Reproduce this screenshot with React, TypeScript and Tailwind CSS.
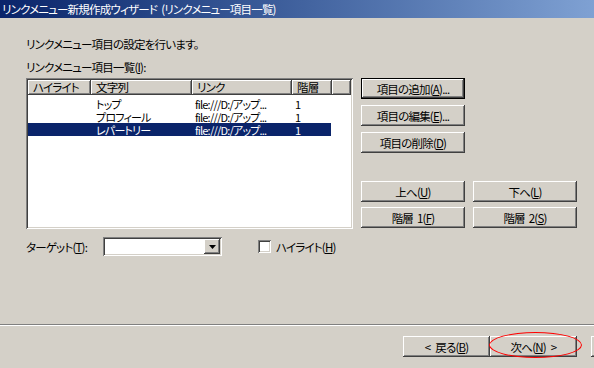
import React from "react";

const raised =
  "bg-[#d4d0c8] shadow-[inset_-1px_-1px_#404040,inset_1px_1px_#ffffff,inset_-2px_-2px_#808080,inset_2px_2px_#d4d0c8]";
const sunken =
  "bg-white shadow-[inset_1px_1px_#808080,inset_-1px_-1px_#ffffff,inset_2px_2px_#404040,inset_-2px_-2px_#d4d0c8]";

const Btn = ({
  children,
  w = "w-[104px]",
  def = false,
}: {
  children?: React.ReactNode;
  w?: string;
  def?: boolean;
}) => (
  <div
    className={`${w} h-[21px] shrink-0 flex items-center justify-center whitespace-nowrap ${
      def ? "border border-black" : ""
    }`}
  >
    <div className={`${raised} w-full h-full flex items-center justify-center`}>
      {children}
    </div>
  </div>
);

const rows = [
  { text: "トップ", link: "file:///D:/アップ...", lv: "1" },
  { text: "プロフィール", link: "file:///D:/アップ...", lv: "1" },
  { text: "レパートリー", link: "file:///D:/アップ...", lv: "1", sel: true },
];

export default function App() {
  return (
    <div
      className="w-[594px] h-[368px] bg-[#d4d0c8] text-black text-[11.5px] leading-[14px] flex flex-col overflow-hidden [font-feature-settings:'palt'] tracking-[-0.8px]"
      style={{ fontFamily: '"Noto Sans CJK JP", "Liberation Sans", sans-serif' }}
    >
      {/* title bar */}
      <div className="h-[18px] shrink-0 bg-gradient-to-r from-[#0a246a] to-[#7fa1d3] text-white flex items-center pl-[2px] whitespace-nowrap">
        リンクメニュー新規作成ウィザード<span className="ml-[4px]">(リンクメニュー項目一覧)</span>
      </div>

      <div className="flex-1 flex flex-col pl-[26px]">
        <div className="mt-[19px] h-[14px]">リンクメニュー項目の設定を行います。</div>
        <div className="mt-[9px] h-[14px]">
          リンクメニュー項目一覧(<u>I</u>):
        </div>

        <div className="mt-[4px] flex">
          {/* list */}
          <div className={`${sunken} w-[327px] h-[151px] p-[2px] shrink-0`}>
            <div className="flex h-[15px]">
              {[
                ["ハイライト", "w-[63px]"],
                ["文字列", "w-[101px]"],
                ["リンク", "w-[100px]"],
                ["階層", "w-[40px]"],
                ["", "flex-1"],
              ].map(([t, w], i) => (
                <div key={i} className={`${raised} ${w} flex items-center pl-[5px] leading-[13px]`}>
                  {t}
                </div>
              ))}
            </div>
            <div className="mt-[2px] flex flex-col">
              {rows.map((r, i) => (
                <div
                  key={i}
                  className={`flex h-[13px] text-[11px] leading-[12px] items-center w-[303px] ${
                    r.sel ? "bg-[#0a246a] text-white" : ""
                  }`}
                >
                  <div className="w-[61px]" />
                  <div className="w-[101px] pl-[7px]">{r.text}</div>
                  <div className="w-[100px] pl-[5px] whitespace-nowrap">{r.link}</div>
                  <div className="pl-[5px]">{r.lv}</div>
                </div>
              ))}
            </div>
          </div>

          {/* buttons */}
          <div className="ml-[8px] flex flex-col">
            <div className="flex flex-col gap-[6px]">
              <Btn def>
                項目の追加(<u>A</u>)...
              </Btn>
              <Btn>
                項目の編集(<u>E</u>)...
              </Btn>
              <Btn>
                項目の削除(<u>D</u>)
              </Btn>
            </div>
            <div className="mt-[28px] grid grid-cols-[104px_104px] gap-x-[8px] gap-y-[5px]">
              <Btn>
                上へ(<u>U</u>)
              </Btn>
              <Btn>
                下へ(<u>L</u>)
              </Btn>
              <Btn>
                <span className="mr-[4px]">階層</span>1(<u>F</u>)
              </Btn>
              <Btn>
                <span className="mr-[4px]">階層</span>2(<u>S</u>)
              </Btn>
            </div>
          </div>
        </div>

        {/* target row */}
        <div className="mt-[8px] flex items-center h-[19px]">
          <div className="w-[77px]">
            ターゲット(<u>T</u>):
          </div>
          <div className={`${sunken} w-[119px] h-[19px] p-[2px] flex justify-end`}>
            <div className={`${raised} w-[16px] h-[15px] flex items-center justify-center`}>
              <svg width="7" height="4" viewBox="0 0 7 4">
                <path d="M0 0h7L3.5 4z" fill="#000" />
              </svg>
            </div>
          </div>
          <div className={`${sunken} ml-[36px] w-[13px] h-[13px]`} />
          <div className="ml-[5px]">
            ハイライト(<u>H</u>)
          </div>
        </div>

        <div className="flex-1" />
      </div>

      {/* separator */}
      <div className="h-[2px] border-t border-[#808080] border-b border-b-white shrink-0" />

      <div className="h-[42px] shrink-0 flex pt-[10px] pl-[403px] relative">
        <Btn w="w-[87px]">
          <span className="mr-[5px]">&lt;</span>戻る(<u>B</u>)
        </Btn>
        <Btn w="w-[87px]">
          次へ(<u>N</u>)<span className="ml-[5px]">&gt;</span>
        </Btn>
        <div className="ml-[14px] shrink-0">
          <Btn w="w-[87px]" />
        </div>
        <div className="absolute left-[489px] top-[6px] w-[93px] h-[26px] rounded-[50%] border border-[#ff0000]" />
      </div>
    </div>
  );
}
